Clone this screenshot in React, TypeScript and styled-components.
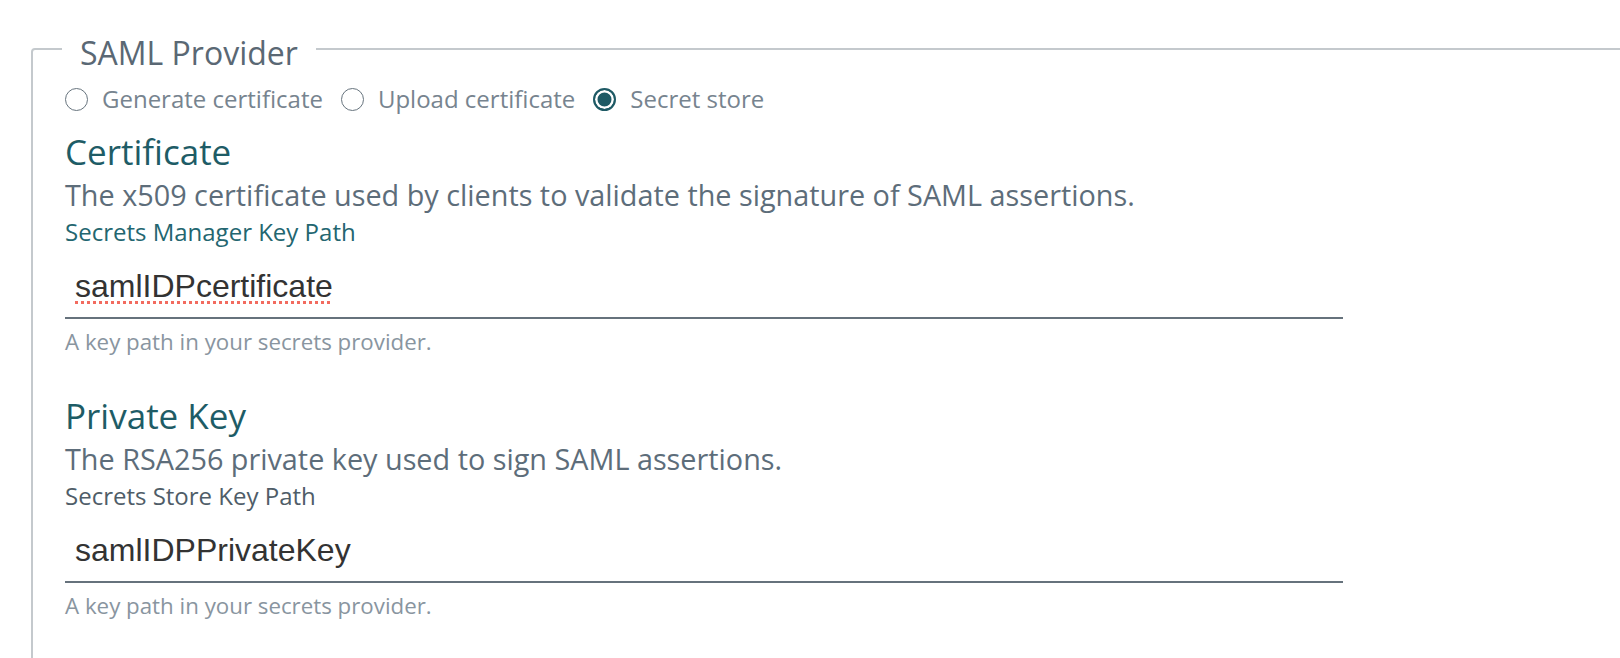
import React, { useState } from 'react';
import styled, { createGlobalStyle } from 'styled-components';

type Mode = 'generate' | 'upload' | 'secret';

const modes: { id: Mode; label: string }[] = [
  { id: 'generate', label: 'Generate certificate' },
  { id: 'upload', label: 'Upload certificate' },
  { id: 'secret', label: 'Secret store' },
];

export default function App() {
  const [mode, setMode] = useState<Mode>('secret');
  const [certPath, setCertPath] = useState('samlIDPcertificate');
  const [keyPath, setKeyPath] = useState('samlIDPPrivateKey');

  return (
    <>
      <GlobalStyle />
      <Page>
        <Fieldset>
          <Legend>SAML Provider</Legend>
          <RadioGroup>
            {modes.map((m) => (
              <RadioOption key={m.id} onClick={() => setMode(m.id)}>
                <RadioDot $checked={mode === m.id} />
                {m.label}
              </RadioOption>
            ))}
          </RadioGroup>

          <Section>
            <Heading>Certificate</Heading>
            <Description>The x509 certificate used by clients to validate the signature of SAML assertions.</Description>
            <FieldLabel htmlFor="cert-path" $active>Secrets Manager Key Path</FieldLabel>
            <TextInput
              id="cert-path"
              $misspelled
              spellCheck={false}
              value={certPath}
              onChange={(e: React.ChangeEvent<HTMLInputElement>) => setCertPath(e.target.value)}
            />
            <Help>A key path in your secrets provider.</Help>
          </Section>

          <Section>
            <Heading>Private Key</Heading>
            <Description>The RSA256 private key used to sign SAML assertions.</Description>
            <FieldLabel htmlFor="key-path">Secrets Store Key Path</FieldLabel>
            <TextInput
              id="key-path"
              spellCheck={false}
              value={keyPath}
              onChange={(e: React.ChangeEvent<HTMLInputElement>) => setKeyPath(e.target.value)}
            />
            <Help>A key path in your secrets provider.</Help>
          </Section>
        </Fieldset>
      </Page>
    </>
  );
}

const GlobalStyle = createGlobalStyle`
  html, body {
    margin: 0;
    overflow: hidden;
    background: #fff;
    font-family: "Open Sans", "Noto Sans", sans-serif;
  }
`;

const Page = styled.div`
  padding: 25px 0 0 31px;
`;

const Fieldset = styled.fieldset`
  box-sizing: border-box;
  width: 1700px;
  min-height: 700px;
  margin: 0;
  padding: 11px 0 0 32px;
  border: 2px solid #c4c9cd;
  border-radius: 4px 0 0 0;
`;

const Legend = styled.legend`
  margin-left: -3px;
  padding: 8px 18px 0;
  font-size: 32px;
  line-height: 40px;
  color: #5a6874;
`;

const RadioGroup = styled.div`
  display: flex;
  align-items: center;
  gap: 18px;
  height: 30px;
`;

const RadioOption = styled.label`
  display: flex;
  align-items: center;
  gap: 14px;
  font-size: 24px;
  line-height: 30px;
  color: #77848f;
  cursor: pointer;
`;

const RadioDot = styled.span<{ $checked?: boolean }>`
  box-sizing: border-box;
  width: 23px;
  height: 23px;
  border-radius: 50%;
  border: ${({ $checked }) => ($checked ? '2px solid #1e5a65' : '1.5px solid #67747e')};
  background: ${({ $checked }) => ($checked ? '#1e5a65' : '#fff')};
  box-shadow: ${({ $checked }) => ($checked ? 'inset 0 0 0 2.5px #fff' : 'none')};
`;

const Section = styled.section`
  margin-top: 12px;

  & + & {
    margin-top: 34px;
  }
`;

const Heading = styled.h2`
  margin: 0;
  font-size: 35px;
  line-height: 52px;
  font-weight: 400;
  color: #1e5c66;
`;

const Description = styled.p`
  margin: 0;
  font-size: 28.8px;
  line-height: 34px;
  color: #5d6d7a;
`;

const FieldLabel = styled.label<{ $active?: boolean }>`
  display: block;
  margin-top: 4px;
  font-size: 24px;
  line-height: 32px;
  color: ${({ $active }) => ($active ? '#236670' : '#4f5d68')};
`;

const TextInput = styled.input<{ $misspelled?: boolean }>`
  display: block;
  box-sizing: border-box;
  width: 1278px;
  height: 58px;
  margin-top: 13px;
  padding: 0 0 6px 10px;
  border: none;
  border-bottom: 2px solid #66727c;
  background: transparent;
  font-family: "Liberation Sans", Arial, sans-serif;
  font-size: 32px;
  color: #333;
  outline: none;
  text-decoration: ${({ $misspelled }) => ($misspelled ? 'underline dotted #f26b5f' : 'none')};
  text-decoration-thickness: 3px;
  text-underline-offset: 4px;
`;

const Help = styled.p`
  margin: 9px 0 0;
  font-size: 22.3px;
  line-height: 28px;
  color: #8995a0;
`;
